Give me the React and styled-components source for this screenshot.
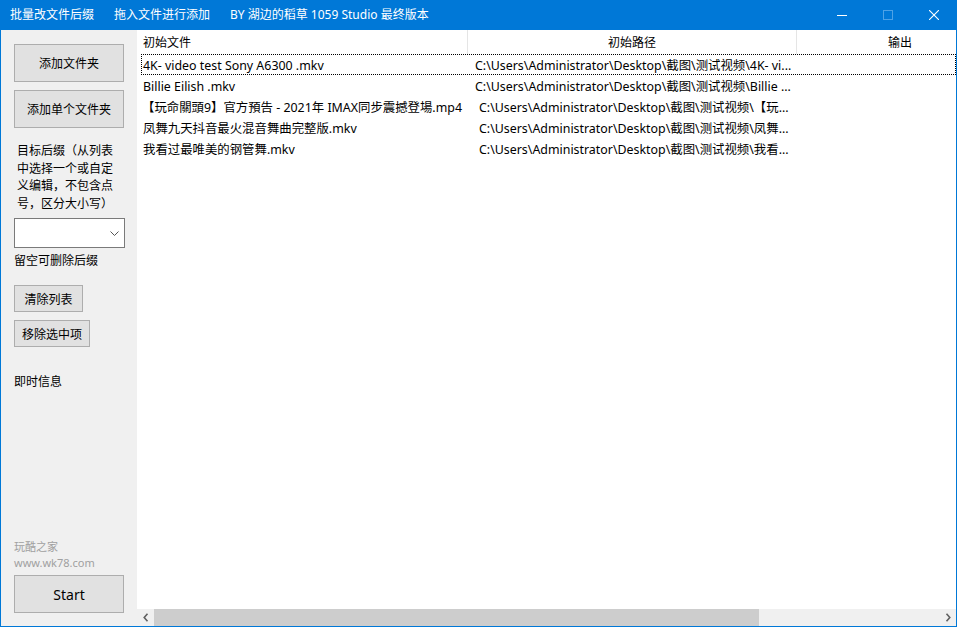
import React from 'react';
import styled, { createGlobalStyle } from 'styled-components';

const GlobalStyle = createGlobalStyle`
  html, body {
    margin: 0;
    padding: 0;
    overflow: hidden;
    background: #fff;
  }
  * {
    box-sizing: border-box;
  }
`;

const FONT = `"Segoe UI", "Noto Sans", "Noto Sans CJK SC", sans-serif`;

const files = [
  { name: '4K- video test Sony A6300 .mkv', path: 'C:\\Users\\Administrator\\Desktop\\截图\\测试视频\\4K- vi...', indent: 7, focused: true },
  { name: 'Billie Eilish .mkv', path: 'C:\\Users\\Administrator\\Desktop\\截图\\测试视频\\Billie ...', indent: 7 },
  { name: '【玩命關頭9】官方預告 - 2021年 IMAX同步震撼登場.mp4', path: 'C:\\Users\\Administrator\\Desktop\\截图\\测试视频\\【玩...', indent: 11, shift: -1 },
  { name: '凤舞九天抖音最火混音舞曲完整版.mkv', path: 'C:\\Users\\Administrator\\Desktop\\截图\\测试视频\\凤舞...', indent: 11 },
  { name: '我看过最唯美的钢管舞.mkv', path: 'C:\\Users\\Administrator\\Desktop\\截图\\测试视频\\我看...', indent: 11 },
];

const App = () => {
  return (
    <>
      <GlobalStyle />
      <Window>
        <TitleBar>
          <TitleItems>
            <TitleItem>批量改文件后缀</TitleItem>
            <TitleItem>拖入文件进行添加</TitleItem>
            <TitleItem>BY 湖边的稻草 1059 Studio 最终版本</TitleItem>
          </TitleItems>
          <Controls>
            <ControlBtn>
              <svg width="10" height="10" viewBox="0 0 10 10">
                <line x1="0" y1="5.5" x2="10" y2="5.5" stroke="#fff" strokeWidth="1" />
              </svg>
            </ControlBtn>
            <ControlBtn>
              <svg width="10" height="10" viewBox="0 0 10 10">
                <rect x="0.5" y="0.5" width="9" height="9" fill="none" stroke="#4ea2e6" strokeWidth="1" />
              </svg>
            </ControlBtn>
            <ControlBtn>
              <svg width="10" height="10" viewBox="0 0 10 10">
                <path d="M0 0 L10 10 M10 0 L0 10" stroke="#fff" strokeWidth="1.1" />
              </svg>
            </ControlBtn>
          </Controls>
        </TitleBar>

        <Body>
          <Sidebar>
            <Button h={38} w={110}>添加文件夹</Button>
            <Button h={38} w={110} top={8}>添加单个文件夹</Button>
            <Hint>目标后缀（从列表中选择一个或自定义编辑，不包含点号，区分大小写）</Hint>
            <Select>
              <svg width="9" height="5" viewBox="0 0 9 5">
                <path d="M0.5 0.5 L4.5 4.5 L8.5 0.5" fill="none" stroke="#555" strokeWidth="1" />
              </svg>
            </Select>
            <SmallLabel>留空可删除后缀</SmallLabel>
            <Button h={27} w={69} top={16}>清除列表</Button>
            <Button h={27} w={76} top={8}>移除选中项</Button>
            <InfoLabel>即时信息</InfoLabel>
            <Spacer />
            <Credit>玩酷之家</Credit>
            <Credit>www.wk78.com</Credit>
            <StartButton>Start</StartButton>
          </Sidebar>

          <ListPanel>
            <Header>
              <HeadCell w={331} align="left">初始文件</HeadCell>
              <HeadCell w={329} align="center">初始路径</HeadCell>
              <HeadCell w={207} align="center">输出</HeadCell>
            </Header>
            <Rows>
              {files.map((f) => (
                <Row key={f.name} focused={f.focused}>
                  <NameCell shift={f.shift}>{f.name}</NameCell>
                  <PathCell indent={f.indent}>{f.path}</PathCell>
                </Row>
              ))}
            </Rows>
            <HScroll>
              <ArrowBtn>
                <svg width="6" height="9" viewBox="0 0 6 9">
                  <path d="M4.5 0.8 L1.2 4.5 L4.5 8.2" fill="none" stroke="#606060" strokeWidth="1.6" />
                </svg>
              </ArrowBtn>
              <Track>
                <Thumb />
              </Track>
              <ArrowBtn>
                <svg width="6" height="9" viewBox="0 0 6 9">
                  <path d="M1.5 0.8 L4.8 4.5 L1.5 8.2" fill="none" stroke="#606060" strokeWidth="1.6" />
                </svg>
              </ArrowBtn>
            </HScroll>
          </ListPanel>
        </Body>
      </Window>
    </>
  );
};

export default App;

const Window = styled.div`
  width: 957px;
  height: 627px;
  display: flex;
  flex-direction: column;
  border: 1px solid #0078d7;
  border-top: none;
  font-family: ${FONT};
  font-size: 12px;
  color: #000;
  overflow: hidden;
`;

const TitleBar = styled.div`
  height: 30px;
  flex: none;
  background: #0078d7;
  margin: 0 -1px;
  display: flex;
  align-items: center;
  justify-content: space-between;
  color: #fff;
`;

const TitleItems = styled.div`
  display: flex;
  gap: 20px;
  padding-left: 10px;
`;

const TitleItem = styled.span`
  font-size: 12px;
  line-height: 30px;
  white-space: nowrap;
`;

const Controls = styled.div`
  display: flex;
  height: 30px;
`;

const ControlBtn = styled.div`
  width: 46px;
  height: 30px;
  display: flex;
  align-items: center;
  justify-content: center;
`;

const Body = styled.div`
  flex: 1;
  display: flex;
  min-height: 0;
`;

const Sidebar = styled.div`
  width: 136px;
  flex: none;
  background: #f0f0f0;
  display: flex;
  flex-direction: column;
  align-items: flex-start;
  padding: 14px 0 13px 13px;
`;

const Button = styled.div`
  width: ${(p) => p.w}px;
  height: ${(p) => p.h}px;
  margin-top: ${(p) => p.top || 0}px;
  background: #e1e1e1;
  border: 1px solid #adadad;
  display: flex;
  align-items: center;
  justify-content: center;
  font-size: 12px;
  white-space: nowrap;
`;

const Hint = styled.div`
  width: 100px;
  margin: 14px 0 0 3px;
  font-size: 12px;
  line-height: 17.5px;
`;

const Select = styled.div`
  width: 111px;
  height: 30px;
  margin-top: 6px;
  background: #fff;
  border: 1px solid #7a7a7a;
  display: flex;
  align-items: center;
  justify-content: flex-end;
  padding-right: 5px;
`;

const SmallLabel = styled.div`
  margin-top: 5px;
  font-size: 12px;
  line-height: 16px;
`;

const InfoLabel = styled.div`
  margin-top: 27px;
  font-size: 12px;
  line-height: 16px;
`;

const Spacer = styled.div`
  flex: 1;
`;

const Credit = styled.div`
  font-size: 11px;
  line-height: 16px;
  color: #a0a0a0;
`;

const StartButton = styled(Button)`
  width: 110px;
  height: 38px;
  margin-top: 4px;
  font-size: 14px;
`;

const ListPanel = styled.div`
  flex: 1;
  min-width: 0;
  background: #fff;
  display: flex;
  flex-direction: column;
`;

const Header = styled.div`
  height: 24px;
  flex: none;
  display: flex;
  overflow: hidden;
`;

const HeadCell = styled.div`
  width: ${(p) => p.w}px;
  flex: none;
  height: 24px;
  line-height: 24px;
  padding-top: 1px;
  border-right: 1px solid #e5e5e5;
  text-align: ${(p) => p.align};
  padding-left: ${(p) => (p.align === 'left' ? 6 : 0)}px;
  white-space: nowrap;
`;

const Rows = styled.div`
  flex: 1;
  display: flex;
  flex-direction: column;
`;

const Row = styled.div`
  height: 21px;
  display: flex;
  align-items: center;
  padding-top: 1px;
  margin: 0 0 0 4px;
  font-size: 12.4px;
  outline: ${(p) => (p.focused ? '1px dotted #000' : 'none')};
  outline-offset: -1px;
`;

const NameCell = styled.div`
  width: 327px;
  flex: none;
  padding-left: ${(p) => 2 + (p.shift || 0)}px;
  white-space: nowrap;
  overflow: visible;
`;

const PathCell = styled.div`
  width: 329px;
  flex: none;
  padding-left: ${(p) => p.indent}px;
  white-space: nowrap;
  overflow: hidden;
`;

const HScroll = styled.div`
  height: 17px;
  flex: none;
  display: flex;
  background: #f0f0f0;
`;

const ArrowBtn = styled.div`
  width: 17px;
  height: 17px;
  flex: none;
  display: flex;
  align-items: center;
  justify-content: center;
`;

const Track = styled.div`
  flex: 1;
  display: flex;
`;

const Thumb = styled.div`
  width: 605px;
  height: 100%;
  background: #cdcdcd;
`;
